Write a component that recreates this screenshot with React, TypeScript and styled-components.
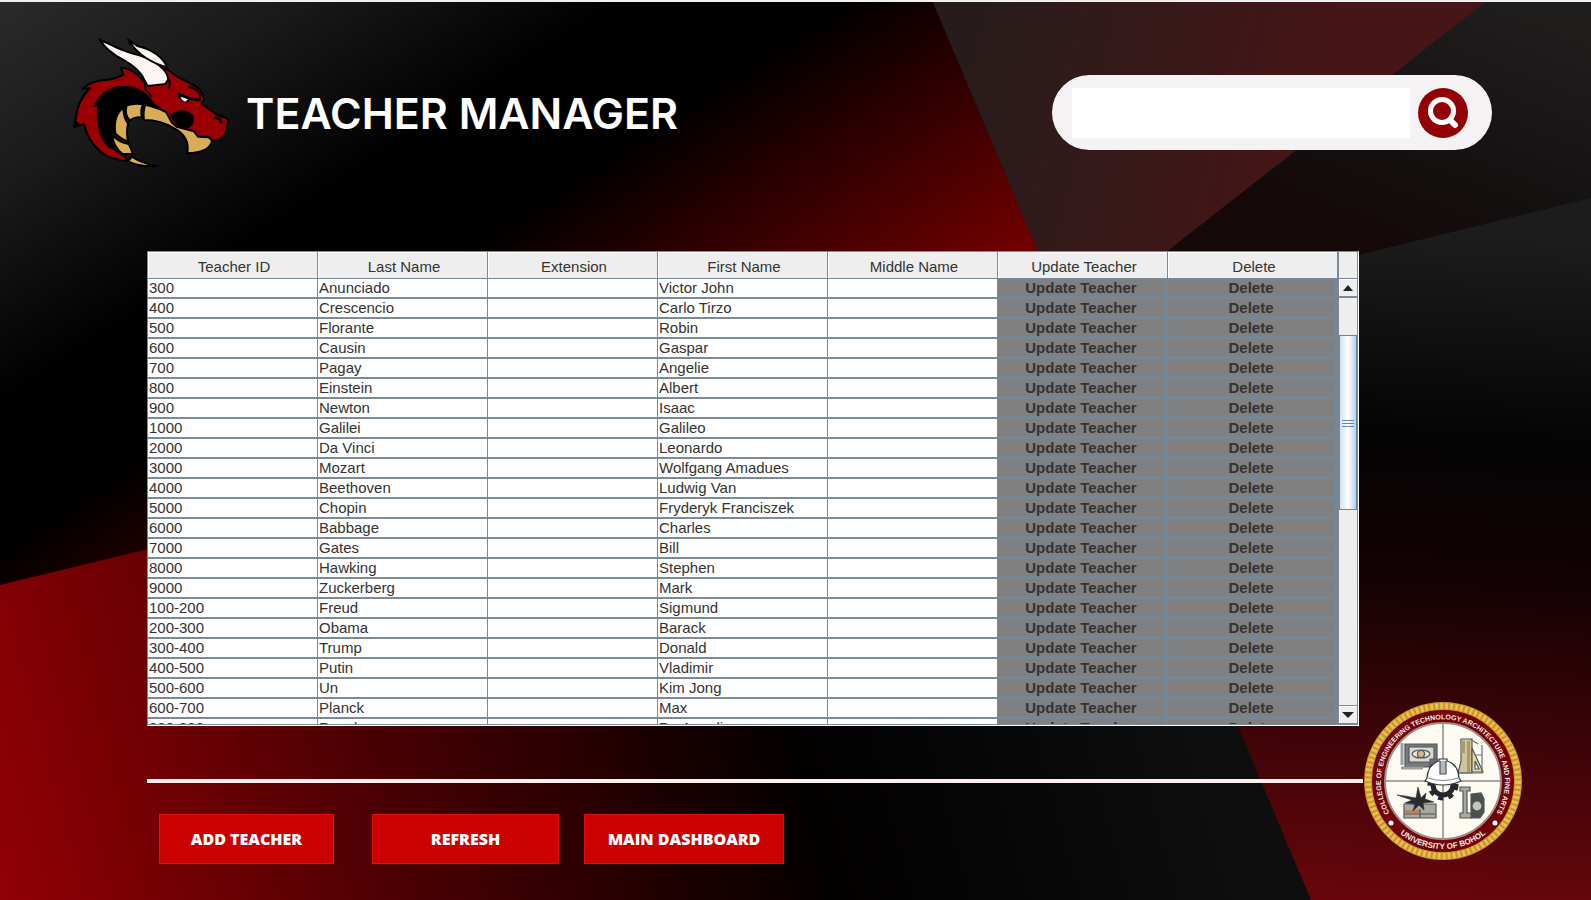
import React from "react";
import styled, { createGlobalStyle, css } from "styled-components";

const GlobalStyle = createGlobalStyle`
  *, *::before, *::after { box-sizing: border-box; }
  body { margin: 0; background: #0a0a0a; }
`;

const Page = styled.div`
  position: relative;
  isolation: isolate;
  display: flex;
  flex-direction: column;
  height: 100vh;
  min-height: 700px;
  overflow: hidden;
  border-top: 2px solid #f0f0f0;
  font-family: "Liberation Sans", Arial, sans-serif;
`;

const Backdrop = styled.svg`
  position: absolute;
  inset: 0;
  z-index: -1;
  width: 100%;
  height: 100%;
`;

const Header = styled.header`
  display: flex;
  align-items: center;
  flex: none;
  height: 221px;
  padding: 0 99px 0 60px;
  margin-bottom: 28px;
`;

const DragonLogo = styled.svg`
  flex: none;
  width: 180px;
  height: 160px;
  margin-bottom: 25px;
`;

const Title = styled.h1`
  flex: 1;
  margin: 0 0 0 6px;
  color: #fff;
  font: 600 43px/48px Inter, sans-serif;
  white-space: nowrap;
`;

const SearchBar = styled.form`
  display: flex;
  align-items: center;
  gap: 8px;
  width: 440px;
  height: 75px;
  padding: 0 24px 0 20px;
  border-radius: 38px;
  background: #f4f2f3;
`;

const SearchInput = styled.input`
  flex: 1;
  min-width: 0;
  height: 50px;
  padding: 0 8px;
  border: 0;
  outline: 0;
  background: #fff;
  font: 16px/20px "Liberation Sans", sans-serif;
`;

const SearchButton = styled.button`
  flex: none;
  width: 50px;
  height: 50px;
  padding: 0;
  border: 0;
  border-radius: 50%;
  background: #930005;
`;

const TableFrame = styled.main`
  display: flex;
  flex: 1;
  min-height: 0;
  margin: 0 232px 0 147px;
  border: 1px solid #7a8a99;
  border-right-color: #fff;
  border-bottom: 1px solid #fff;
  background: #eee;
`;

const Viewport = styled.div`
  flex: 1;
  min-width: 0;
  overflow: hidden;
  border-bottom: 1px solid #7a8a99;
  background: #fff;
`;

const Table = styled.table`
  width: 100%;
  table-layout: fixed;
  border-collapse: separate;
  border-spacing: 0;
  color: #333;
  font-size: 15px;
  line-height: 18px;
`;

const HeadCell = styled.th`
  height: 27px;
  padding: 3px 0 0 3px;
  border: solid #7a8a99;
  border-width: 0 1px 1px 0;
  box-shadow: inset 1px 1px #fff;
  background: #eee;
  font-weight: 400;
  text-align: center;
`;

const Cell = styled.td<{ $action?: boolean }>`
  height: 20px;
  padding: 0 0 0 1px;
  border: solid #7a8a99;
  border-width: 0 1px 2px 0;
  white-space: nowrap;
  ${(p) =>
    p.$action &&
    css`
      padding: 0;
      background: #808080;
      border-width: 0 4px 3px 0;
      border-color: #788692;
    `}
`;

const RowButton = styled.button`
  display: block;
  width: 100%;
  height: 17px;
  padding: 0;
  border: 0;
  background: #808080;
  color: #333;
  font: 700 15px/18px "Liberation Sans", sans-serif;
`;

const ScrollColumn = styled.div`
  display: flex;
  flex-direction: column;
  flex: none;
  width: 20px;
  padding-top: 26px;
  border-left: 1px solid #7a8a99;
  border-right: 1px solid #7a8a99;
`;

const ArrowButton = styled.button`
  display: grid;
  place-items: center;
  flex: none;
  width: 100%;
  height: 20px;
  padding: 0;
  border: solid #7a8a99;
  border-width: 1px 0 2px;
  background: #eee;
  box-shadow: inset 1px 1px #fff;
`;

const Track = styled.div`
  display: flex;
  flex-direction: column;
  flex: 1;
`;

const Thumb = styled.div`
  display: grid;
  place-items: center;
  flex: 0 0 43%;
  margin-top: 37px;
  border: 1px solid #6382bf;
  background: linear-gradient(90deg, #d2e2ef, #fff 50%, #b8cfe5);
`;

const Footer = styled.footer`
  flex: none;
  padding: 53px 68px 36px 147px;
`;

const RuleRow = styled.div`
  display: flex;
  align-items: center;
  height: 4px;
`;

const Rule = styled.hr`
  flex: 1;
  height: 4px;
  margin: 0;
  border: 0;
  background: #fbeeee;
`;

const Seal = styled.svg`
  flex: none;
  width: 160px;
  height: 160px;
`;

const Actions = styled.nav`
  display: flex;
  margin-top: 31px;
  padding-left: 12px;
`;

const ActionButton = styled.button<{ $width: number; $gap?: number }>`
  width: ${(p) => p.$width}px;
  height: 50px;
  margin-right: ${(p) => p.$gap ?? 0}px;
  padding: 0;
  border: 1px solid #e01010;
  background: #c00;
  color: #fff;
  font: 800 16px/20px "Open Sans", sans-serif;
`;

const SealText = styled.text<{ $size: number }>`
  fill: #f6e9e4;
  font: 700 ${(p) => p.$size}px "Liberation Sans", sans-serif;
`;

const columns = ["Teacher ID", "Last Name", "Extension", "First Name", "Middle Name", "Update Teacher", "Delete"];

const teachers: [string, string, string][] = [
  ["300", "Anunciado", "Victor John"],
  ["400", "Crescencio", "Carlo Tirzo"],
  ["500", "Florante", "Robin"],
  ["600", "Causin", "Gaspar"],
  ["700", "Pagay", "Angelie"],
  ["800", "Einstein", "Albert"],
  ["900", "Newton", "Isaac"],
  ["1000", "Galilei", "Galileo"],
  ["2000", "Da Vinci", "Leonardo"],
  ["3000", "Mozart", "Wolfgang Amadues"],
  ["4000", "Beethoven", "Ludwig Van"],
  ["5000", "Chopin", "Fryderyk Franciszek"],
  ["6000", "Babbage", "Charles"],
  ["7000", "Gates", "Bill"],
  ["8000", "Hawking", "Stephen"],
  ["9000", "Zuckerberg", "Mark"],
  ["100-200", "Freud", "Sigmund"],
  ["200-300", "Obama", "Barack"],
  ["300-400", "Trump", "Donald"],
  ["400-500", "Putin", "Vladimir"],
  ["500-600", "Un", "Kim Jong"],
  ["600-700", "Planck", "Max"],
  ["800-900", "Rosales", "Dr. Angeli"],
];

function Background() {
  return (
    <Backdrop viewBox="0 0 1591 898" preserveAspectRatio="none" aria-hidden="true">
      <defs>
        <linearGradient id="upper" gradientUnits="userSpaceOnUse" x1="0" y1="0" x2="430" y2="664">
          <stop offset="0" stopColor="#2a2a2a" />
          <stop offset=".2" stopColor="#1a1a1a" />
          <stop offset=".43" stopColor="#000" />
          <stop offset=".58" stopColor="#000" />
          <stop offset="1" stopColor="#7c0000" />
        </linearGradient>
        <linearGradient id="lower" gradientUnits="userSpaceOnUse" x1="0" y1="870" x2="1150" y2="560">
          <stop offset="0" stopColor="#900006" />
          <stop offset=".3" stopColor="#500003" />
          <stop offset=".68" stopColor="#020000" />
          <stop offset="1" stopColor="#0e0e0e" />
        </linearGradient>
        <linearGradient id="corner" gradientUnits="userSpaceOnUse" x1="1400" y1="230" x2="1360" y2="900">
          <stop offset="0" stopColor="#1c1c1c" />
          <stop offset=".3" stopColor="#040404" />
          <stop offset=".5" stopColor="#120204" />
          <stop offset="1" stopColor="#68060b" />
        </linearGradient>
        <linearGradient id="shard" gradientUnits="userSpaceOnUse" x1="960" y1="60" x2="1300" y2="150">
          <stop offset="0" stopColor="#271c1b" />
          <stop offset="1" stopColor="#451517" />
        </linearGradient>
        <linearGradient id="edge" gradientUnits="userSpaceOnUse" x1="1500" y1="0" x2="1400" y2="260">
          <stop offset="0" stopColor="#201e1d" />
          <stop offset=".5" stopColor="#151313" />
          <stop offset="1" stopColor="#140808" />
        </linearGradient>
      </defs>
      <rect width="1591" height="898" fill="url(#upper)" />
      <path d="M0 583L1591 196V898H0z" fill="url(#lower)" />
      <path d="M933 0H1591V898H1311z" fill="url(#corner)" />
      <path d="M933 0H1591V196L1069 324z" fill="url(#edge)" />
      <path d="M933 0H1485L1072 324H1069z" fill="url(#shard)" />
    </Backdrop>
  );
}

function Dragon() {
  return (
    <DragonLogo viewBox="0 0 540 480" role="img" aria-label="Dragon">
      <g stroke="#000" strokeWidth="6" strokeLinejoin="round">
        <path
          fill="#9a0003"
          d="M318 145L345 166L400 195Q428 208 432 238L425 252L474 286L500 294L504 302L496 343L482 357L462 362L447 350L414 350L402 336L352 326L322 295L292 262L268 250Q210 196 160 232Q112 275 135 348Q154 392 190 405L208 424Q150 419 124 397Q82 362 72 312L42 322L48 290Q54 240 90 205L68 206Q92 184 128 181Q160 180 190 164L182 143Q220 143 250 184L300 160z"
        />
        <path
          fill="#000"
          d="M104 258Q128 204 188 200Q250 200 280 252L300 266Q206 236 172 300Q150 340 160 384L146 380Q108 340 114 262L124 247z"
        />
        <path fill="#d9ac58" d="M200 256Q224 248 250 253Q240 270 246 292Q222 290 210 302Q192 286 200 256z" />
        <path fill="#d9ac58" d="M256 254Q292 262 318 276L336 308L350 320L402 334L414 350L446 352L456 362Q450 398 382 400Q390 350 344 326Q304 300 252 300Q248 276 256 254z" />
        <path fill="#d9ac58" d="M190 262Q190 294 204 310Q198 340 204 364Q184 358 166 340Q158 290 190 262z" />
        <path fill="#d9ac58" d="M156 344Q176 368 206 372Q216 390 218 402L188 402Q160 382 156 344z" />
        <path fill="#d9ac58" d="M216 410Q246 430 288 438Q242 442 204 424z" />
        <path fill="#000" stroke="none" d="M330 284Q370 256 400 286Q408 320 376 328Q344 320 330 284z" />
        <path fill="#fff5f5" d="M120 60L150 73Q190 94 232 104Q286 122 310 148Q322 160 325 178L316 192L264 198L254 182Q240 148 194 122Q140 94 120 60z" />
        <path fill="#fff5f5" d="M206 60L232 78Q300 94 322 142Q286 132 258 114Q226 94 206 60z" />
        <path fill="none" d="M254 182L256 208L276 230M322 172Q334 182 326 208M384 200Q430 210 418 244" />
        <path fill="none" strokeWidth="8" d="M352 218Q378 238 420 240M462 292L480 298L484 310M356 226Q366 246 388 242" />
      </g>
      <path fill="#fff" d="M362 230L384 238L376 245L366 240z" />
      <path fill="#000" d="M114 52L130 66L122 72zM200 52L216 68L208 74zM38 326L48 302L60 312zM270 432L298 438L272 443z" />
    </DragonLogo>
  );
}

function CollegeSeal() {
  return (
    <Seal viewBox="0 0 160 160" role="img" aria-label="University of Bohol college seal">
      <defs>
        <path id="seal-top" d="M30 117A62 62 0 1 1 130 117" />
        <path id="seal-bottom" d="M25 120A68 68 0 0 0 135 120" />
      </defs>
      <circle cx="80" cy="80" r="75" fill="#710208" stroke="#c8932c" strokeWidth="8" />
      <circle cx="80" cy="80" r="75" fill="none" stroke="#e9bf4c" strokeWidth="6" strokeDasharray="3 2" />
      <circle cx="80" cy="80" r="58" fill="#fdfaf1" stroke="#a08c86" strokeWidth="2" />
      <path d="M80 23V137M23 80H137" stroke="#555" strokeWidth="1" />
      <SealText $size={7}>
        <textPath href="#seal-top" startOffset="50%" textAnchor="middle">
          COLLEGE OF ENGINEERING TECHNOLOGY ARCHITECTURE AND FINE ARTS
        </textPath>
      </SealText>
      <SealText $size={8}>
        <textPath href="#seal-bottom" startOffset="50%" textAnchor="middle">
          UNIVERSITY OF BOHOL
        </textPath>
      </SealText>
      <g fill="#fff">
        <circle cx="28" cy="122" r="2.5" />
        <circle cx="132" cy="122" r="2.5" />
      </g>
      <g stroke="#50575a" strokeWidth="1.2">
        <path fill="#737b7e" d="M42 43H74V66H42z" />
        <path fill="#dedacb" d="M46 46H71V61H46z" />
        <ellipse cx="58" cy="53" rx="9" ry="4" fill="#e8e3d6" />
        <circle cx="58" cy="53" r="3.5" fill="#d9b48f" />
        <path d="M39 42V64M38 67H60" fill="none" strokeWidth="3" stroke="#9aa0a0" />
        <path fill="#6b7275" d="M67 58H74V68H67z" />
        <path fill="#cfc59d" d="M98 38H109V72H95L98 60z" />
        <path fill="#a89b68" stroke="none" d="M98 40H102V52H98zM104 40H107V71H104z" />
        <path fill="#ead7a6" d="M109 47L120 71H109z" />
        <path fill="#fdfaf1" d="M112 60L116 68H112z" />
        <path d="M119 44V72M94 72H120M107 38L115 43M113 54H119" fill="none" stroke="#5e7780" />
        <path fill="#a9a9a0" d="M41 103H73V117H41z" />
        <path fill="#b98558" stroke="none" d="M42 109H57V112H42z" />
        <path d="M42 113H72M57 108V117" />
        <path fill="#292d2f" stroke="#292d2f" strokeWidth=".6" d="M34 94L42 95L53 97L55 86L58 97L63 92L62 98L71 101L60 102L61 109L56 104L50 110L52 103L42 102L49 99z" />
        <path fill="#aaa995" d="M97 86H107V90H104V112H109V117H97V112H100V90H97z" />
        <path fill="#4b5051" d="M108 93L118 92L121 98V111L117 117H108z" />
        <circle cx="114" cy="105" r="5" fill="#c7c7b9" />
      </g>
      <circle cx="80" cy="84" r="10" fill="none" stroke="#24282a" strokeWidth="5" />
      <circle cx="80" cy="84" r="13" fill="none" stroke="#24282a" strokeWidth="5" strokeDasharray="5 5" />
      <path d="M64 77Q65 63 76 60V58H84V60Q95 63 96 77L98 80Q80 88 62 80z" fill="#fff" stroke="#303436" strokeWidth="1.2" />
      <path d="M65 77Q80 82 95 77" fill="none" stroke="#888" />
      <path d="M77 60V73H83V60" fill="#b5b8b8" stroke="#4b5051" strokeWidth="1.2" />
    </Seal>
  );
}

export default function App() {
  return (
    <Page>
      <GlobalStyle />
      <Background />
      <Header>
        <Dragon />
        <Title>TEACHER MANAGER</Title>
        <SearchBar onSubmit={(e) => e.preventDefault()}>
          <SearchInput type="search" aria-label="Search teachers" />
          <SearchButton type="submit" aria-label="Search">
            <svg width="50" height="50" viewBox="0 0 50 50" fill="none" stroke="#fff" strokeWidth="5" strokeLinecap="round">
              <circle cx="24" cy="23" r="11.5" />
              <path d="M32 32L37 37" strokeWidth="6" />
            </svg>
          </SearchButton>
        </SearchBar>
      </Header>

      <TableFrame>
        <Viewport>
          <Table>
            <thead>
              <tr>
                {columns.map((c) => (
                  <HeadCell key={c} scope="col">{c}</HeadCell>
                ))}
              </tr>
            </thead>
            <tbody>
              {teachers.map(([id, last, first]) => (
                <tr key={id}>
                  <Cell>{id}</Cell>
                  <Cell>{last}</Cell>
                  <Cell />
                  <Cell>{first}</Cell>
                  <Cell />
                  <Cell $action><RowButton type="button">Update Teacher</RowButton></Cell>
                  <Cell $action><RowButton type="button">Delete</RowButton></Cell>
                </tr>
              ))}
            </tbody>
          </Table>
        </Viewport>
        <ScrollColumn>
          <ArrowButton type="button" aria-label="Scroll up">
            <svg width="10" height="6" viewBox="0 0 10 6"><path d="M0 6L5 0L10 6z" fill="#222" /></svg>
          </ArrowButton>
          <Track>
            <Thumb>
              <svg width="12" height="8" viewBox="0 0 12 8"><path d="M0 1.5H12M0 4.5H12M0 7.5H12" stroke="#6382bf" /></svg>
            </Thumb>
          </Track>
          <ArrowButton type="button" aria-label="Scroll down">
            <svg width="12" height="6" viewBox="0 0 12 6"><path d="M0 0H12L6 6z" fill="#222" /></svg>
          </ArrowButton>
        </ScrollColumn>
      </TableFrame>

      <Footer>
        <RuleRow>
          <Rule />
          <CollegeSeal />
        </RuleRow>
        <Actions>
          <ActionButton type="button" $width={175} $gap={38}>ADD TEACHER</ActionButton>
          <ActionButton type="button" $width={187} $gap={25}>REFRESH</ActionButton>
          <ActionButton type="button" $width={200}>MAIN DASHBOARD</ActionButton>
        </Actions>
      </Footer>
    </Page>
  );
}
